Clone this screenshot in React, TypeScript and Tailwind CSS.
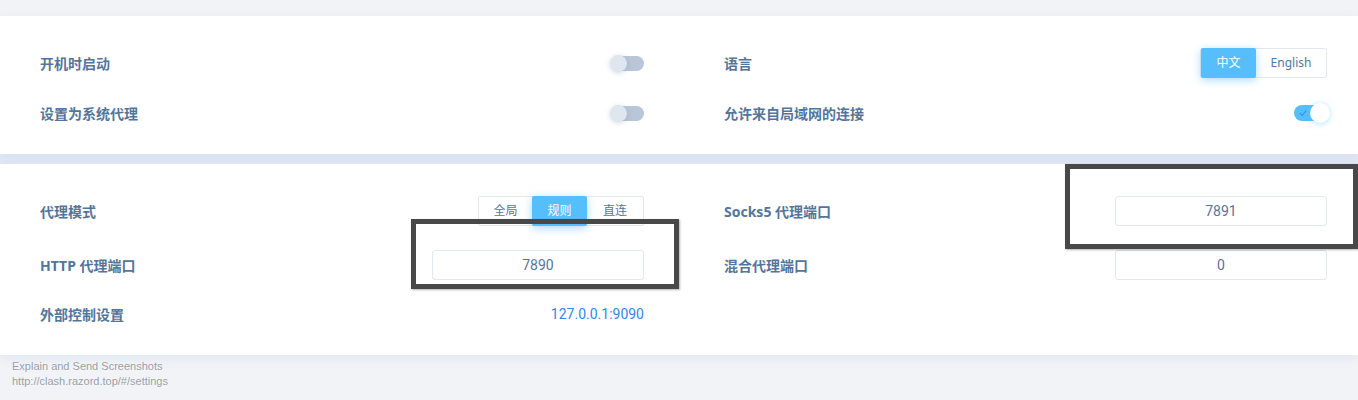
import React from "react";

const labelCls =
  "text-[14px] font-bold text-[#54759a] [font-family:'Noto_Sans','Noto_Sans_CJK_SC',sans-serif]";

const Toggle = ({ on }: { on?: boolean }) =>
  on ? (
    <div className="relative h-[16px] w-[34px] rounded-full bg-[#57befc]">
      <svg
        viewBox="0 0 10 10"
        className="absolute left-[5px] top-[4px] h-[8px] w-[8px]"
        fill="none"
        stroke="#3a8fd8"
        strokeWidth="1.4"
      >
        <path d="M1 5 L4 8 L9 2" />
      </svg>
      <div className="absolute right-[-2px] top-[-2px] h-[20px] w-[20px] rounded-full bg-white shadow-[0_1px_6px_rgba(87,190,252,0.45)]" />
    </div>
  ) : (
    <div className="relative h-[15px] w-[33px] rounded-full bg-[#b8c6d8]">
      <div className="absolute left-[-1px] top-[-1px] h-[17px] w-[17px] rounded-full bg-[#dfe6ef] shadow-[0_1px_5px_rgba(120,140,170,0.35)]" />
    </div>
  );

const Segmented = ({
  items,
  active,
  widths,
}: {
  items: string[];
  active: number;
  widths: number[];
}) => (
  <div className="flex h-[30px] rounded-[2px] border border-[#e3e8ef] text-[12px] [font-family:'Noto_Sans','Noto_Sans_CJK_SC',sans-serif]">
    {items.map((it, i) => (
      <div
        key={it}
        style={{ width: widths[i] }}
        className={
          i === active
            ? "-my-px flex h-[30px] items-center justify-center rounded-[2px] bg-[#57befc] text-white shadow-[0_2px_8px_rgba(87,190,252,0.55)]"
            : "flex items-center justify-center text-[#54759a]"
        }
      >
        {it}
      </div>
    ))}
  </div>
);

const PortInput = ({ value }: { value: string }) => (
  <div className="flex h-[30px] w-[212px] items-center justify-center rounded-[3px] border border-[#e3e8ef] bg-white text-[14px] text-[#54759a] [font-family:Roboto,sans-serif]">
    {value}
  </div>
);

const Row = ({
  label,
  h,
  children,
}: {
  label: string;
  h: string;
  children?: React.ReactNode;
}) => (
  <div className={`flex items-center justify-between ${h}`}>
    <span className={labelCls}>{label}</span>
    {children}
  </div>
);

export default function App() {
  return (
    <div className="relative h-[400px] w-[1358px] overflow-hidden bg-[#f1f3f6]">
      <div className="h-[16px]" />

      {/* first card */}
      <div className="relative z-10 grid grid-cols-[604px_603px] gap-x-[80px] bg-white pb-[16px] pl-[40px] pr-[31px] pt-[22px] shadow-[0_3px_10px_rgba(150,185,230,0.18)]">
        <div>
          <Row label="开机时启动" h="h-[50px]">
            <Toggle />
          </Row>
          <Row label="设置为系统代理" h="h-[50px]">
            <Toggle />
          </Row>
        </div>
        <div>
          <Row label="语言" h="h-[50px]">
            <Segmented items={["中文", "English"]} active={0} widths={[55, 70]} />
          </Row>
          <Row label="允许来自局域网的连接" h="h-[50px]">
            <div className="mr-[-1px]">
              <Toggle on />
            </div>
          </Row>
        </div>
      </div>

      <div className="h-[10px] bg-[#e2e9f3]" />

      {/* second card */}
      <div className="relative z-10 grid grid-cols-[604px_603px] gap-x-[80px] bg-white pb-[19px] pl-[40px] pr-[31px] pt-[20px] shadow-[0_3px_10px_rgba(150,185,230,0.18)]">
        <div>
          <Row label="代理模式" h="h-[54px]">
            <Segmented items={["全局", "规则", "直连"]} active={1} widths={[53, 55, 56]} />
          </Row>
          <Row label="HTTP 代理端口" h="h-[54px]">
            <PortInput value="7890" />
          </Row>
          <Row label="外部控制设置" h="h-[44px]">
            <span className="text-[14px] text-[#2f88e8] [font-family:Roboto,sans-serif]">
              127.0.0.1:9090
            </span>
          </Row>
        </div>
        <div>
          <Row label="Socks5 代理端口" h="h-[54px]">
            <PortInput value="7891" />
          </Row>
          <Row label="混合代理端口" h="h-[54px]">
            <PortInput value="0" />
          </Row>
        </div>
      </div>

      <div className="px-[12px] pt-[4px] text-[11px] leading-[15px] text-[#9a9ea5] [font-family:'Liberation_Sans',sans-serif] [text-shadow:0_0_2px_#ffffff]">
        <div>Explain and Send Screenshots</div>
        <div>http://clash.razord.top/#/settings</div>
      </div>

      {/* annotation boxes drawn over the screenshot */}
      <div className="absolute left-[411px] top-[219px] z-20 h-[70px] w-[268px] border-[5px] border-[#484848] shadow-[1px_1px_2px_rgba(0,0,0,0.3)]" />
      <div className="absolute left-[1065px] top-[164px] z-20 h-[85px] w-[293px] border-[5px] border-[#484848] shadow-[1px_1px_2px_rgba(0,0,0,0.3)]" />
    </div>
  );
}
